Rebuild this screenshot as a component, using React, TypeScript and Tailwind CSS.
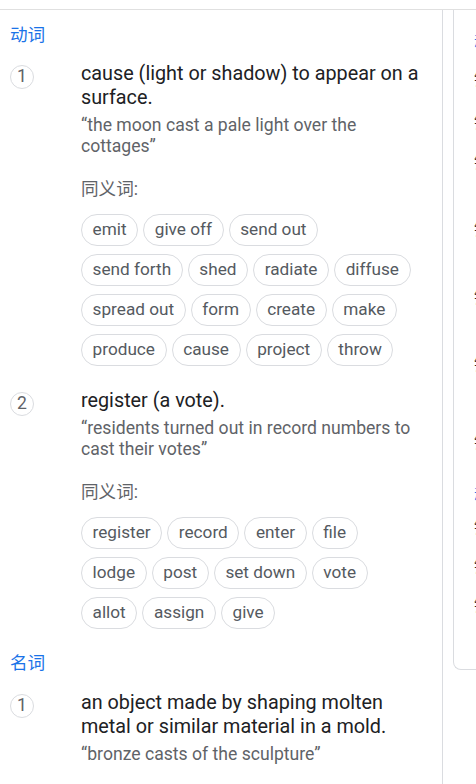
import React from "react";

type Sense = {
  def: string;
  example: string;
  synonyms?: string[];
};

const verbSenses: Sense[] = [
  {
    def: "cause (light or shadow) to appear on a surface.",
    example: "“the moon cast a pale light over the cottages”",
    synonyms: [
      "emit", "give off", "send out", "send forth", "shed", "radiate", "diffuse",
      "spread out", "form", "create", "make", "produce", "cause", "project", "throw",
    ],
  },
  {
    def: "register (a vote).",
    example: "“residents turned out in record numbers to cast their votes”",
    synonyms: ["register", "record", "enter", "file", "lodge", "post", "set down", "vote", "allot", "assign", "give"],
  },
];

const nounSenses: Sense[] = [
  {
    def: "an object made by shaping molten metal or similar material in a mold.",
    example: "“bronze casts of the sculpture”",
  },
];

const font = { fontFamily: "Roboto, 'Noto Sans CJK SC', sans-serif" };

function SenseRow({ n, s }: { n: number; s: Sense }) {
  return (
    <div className="flex">
      <div className="w-[71px] shrink-0">
        <div className="mt-[3px] w-[24px] h-[24px] rounded-full border border-[#dadce0] flex items-center justify-center text-[17.6px] leading-none text-[#5f6368]">
          {n}
        </div>
      </div>
      <div className="flex-1 min-w-0">
        <div className="text-[19.8px] leading-[24px] text-[#202124]">{s.def}</div>
        <div className="mt-[5px] text-[17.6px] leading-[21px] text-[#5f6368]">{s.example}</div>
        {s.synonyms && (
          <div className="mt-[22px]">
            <div className="text-[17.6px] leading-[21px] text-[#5f6368]">同义词:</div>
            <div className="mt-[14px] flex flex-wrap gap-y-[8px]">
              {s.synonyms.map((w) => (
                <span
                  key={w}
                  className="mr-[5px] h-[32px] px-[10.6px] rounded-full border border-[#dadce0] flex items-center text-[17.2px] text-[#555a5f]"
                >
                  {w}
                </span>
              ))}
            </div>
          </div>
        )}
      </div>
    </div>
  );
}

const sideLines: { y: number; blue?: boolean }[] = [
  { y: 24, blue: true },
  { y: 62 }, { y: 105 }, { y: 145 }, { y: 212 }, { y: 280 }, { y: 347 },
  { y: 425 }, { y: 477, blue: true }, { y: 510 }, { y: 549 }, { y: 588 },
];

export default function App() {
  return (
    <div className="w-[476px] h-[784px] overflow-hidden bg-white" style={font}>
      <div className="h-[9px]" />
      <div className="flex border-t border-[#e0e0e0] h-[775px]">
        <div className="w-[443px] shrink-0 border-r border-[#dadce0] pl-[10px] pr-[20px]">
          <div className="mt-[13px] text-[17.6px] leading-[24px] text-[#1a73e8]">动词</div>
          <div className="mt-[15px] flex flex-col gap-[23px]">
            {verbSenses.map((s, i) => (
              <SenseRow key={i} n={i + 1} s={s} />
            ))}
          </div>
          <div className="mt-[22px] text-[17.6px] leading-[24px] text-[#1a73e8]">名词</div>
          <div className="mt-[16px]">
            {nounSenses.map((s, i) => (
              <SenseRow key={i} n={i + 1} s={s} />
            ))}
          </div>
        </div>
        <div className="ml-[10px] flex-1 h-[660px] border-l border-b border-[#dadce0] rounded-bl-[8px] overflow-hidden relative">
          {sideLines.map((l, i) => (
            <div
              key={i}
              className={`absolute left-[20px] text-[15px] leading-[16px] whitespace-nowrap ${l.blue ? "text-[#1a73e8]" : "text-[#202124]"}`}
              style={{ top: l.y }}
            >
              {l.blue ? "动词" : "铸造"}
            </div>
          ))}
        </div>
      </div>
    </div>
  );
}
